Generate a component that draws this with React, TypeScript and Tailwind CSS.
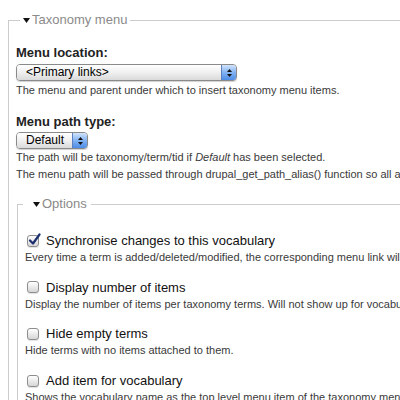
import React from "react";

function Tri() {
  return (
    <svg width="7" height="5" viewBox="0 0 7 5" className="block">
      <path d="M0 0H7L3.5 5Z" fill="#111" />
    </svg>
  );
}

function AquaSelect({ text, className }: { text: string; className: string }) {
  return (
    <div
      className={
        "flex h-[17px] rounded-[4px] border border-[#8a8a8a] overflow-hidden shadow-[0_1px_1px_rgba(0,0,0,0.18)] " +
        className
      }
    >
      <div className="flex-1 bg-linear-to-b from-white via-[#f0f0f0] to-[#dadada] text-[12px] leading-[15px] text-black pl-[9px] whitespace-nowrap">
        {text}
      </div>
      <div className="w-[15px] border-l border-[#5b7fbf] bg-linear-to-b from-[#d3e4fb] via-[#82b2f2] to-[#4d8ce6] flex flex-col items-center justify-center gap-[2px]">
        <svg width="5" height="3" viewBox="0 0 5 3" className="block">
          <path d="M0 3H5L2.5 0Z" fill="#111" />
        </svg>
        <svg width="5" height="3" viewBox="0 0 5 3" className="block">
          <path d="M0 0H5L2.5 3Z" fill="#111" />
        </svg>
      </div>
    </div>
  );
}

function Checkbox({ checked }: { checked?: boolean }) {
  return (
    <div className="relative w-[12px] h-[12px] shrink-0 rounded-[3px] border border-[#8e8e8e] bg-linear-to-b from-white to-[#d6d6d6] shadow-[0_1px_1px_rgba(0,0,0,0.12)]">
      {checked && (
        <svg
          width="13"
          height="13"
          viewBox="0 0 13 13"
          className="absolute left-[0px] top-[-3px]"
        >
          <path
            d="M2 7.5L5 10.5L11.5 1.5"
            stroke="#1c2f6e"
            strokeWidth="2.2"
            fill="none"
            strokeLinecap="round"
            strokeLinejoin="round"
          />
        </svg>
      )}
    </div>
  );
}

function Item({
  label,
  desc,
  checked,
  first,
}: {
  label: string;
  desc: string;
  checked?: boolean;
  first?: boolean;
}) {
  return (
    <div className={first ? "mt-[20px]" : "mt-[12.7px]"}>
      <div className="flex items-center h-[17px] pl-[2px] text-[13px] leading-[17px] text-[#111]">
        <Checkbox checked={checked} />
        <span className="ml-[7px] whitespace-nowrap">{label}</span>
      </div>
      <div className="text-[11px] leading-[17px] text-[#3a3a3a] whitespace-nowrap">
        {desc}
      </div>
    </div>
  );
}

export default function App() {
  return (
    <div className="w-[400px] h-[400px] overflow-hidden bg-white font-['Liberation_Sans',Arial,sans-serif] pl-[8px] pt-[12px]">
      <fieldset className="w-[600px] border border-[#cccccc] pl-[7px] pb-[20px]">
        <legend className="ml-[4px] pl-[3px] pr-[3px] h-[16px] flex items-center">
          <Tri />
          <span className="ml-[2px] text-[13px] leading-[16px] text-[#8a8a8a]">
            Taxonomy menu
          </span>
        </legend>

        <div className="mt-[17px] text-[13px] leading-[16px] font-bold text-[#222]">
          Menu location:
        </div>
        <AquaSelect text="<Primary links>" className="mt-[3px] w-[221px]" />
        <div className="mt-[1px] text-[11px] leading-[17px] text-[#3a3a3a] whitespace-nowrap">
          The menu and parent under which to insert taxonomy menu items.
        </div>

        <div className="mt-[15px] text-[13px] leading-[16px] font-bold text-[#222]">
          Menu path type:
        </div>
        <AquaSelect text="Default" className="mt-[2px] w-[72px]" />
        <div className="text-[11px] leading-[17px] text-[#3a3a3a] whitespace-nowrap">
          The path will be taxonomy/term/tid if <i>Default</i> has been selected.
        </div>
        <div className="text-[11px] leading-[17px] text-[#3a3a3a] whitespace-nowrap">
          The menu path will be passed through drupal_get_path_alias() function so all aliases will be applied.
        </div>

        <fieldset className="mt-[13px] ml-[1px] w-[600px] border border-[#cccccc] pl-[7px] pb-[20px]">
          <legend className="-ml-[2px] pl-[10px] pr-[4px] h-[16px] flex items-center">
            <Tri />
            <span className="ml-[2px] text-[13px] leading-[16px] text-[#8a8a8a]">
              Options
            </span>
          </legend>
          <Item
            first
            checked
            label="Synchronise changes to this vocabulary"
            desc="Every time a term is added/deleted/modified, the corresponding menu link will be altered too."
          />
          <Item
            label="Display number of items"
            desc="Display the number of items per taxonomy terms. Will not show up for vocabulary menu items."
          />
          <Item
            label="Hide empty terms"
            desc="Hide terms with no items attached to them."
          />
          <Item
            label="Add item for vocabulary"
            desc="Shows the vocabulary name as the top level menu item of the taxonomy menu."
          />
        </fieldset>
      </fieldset>
    </div>
  );
}
